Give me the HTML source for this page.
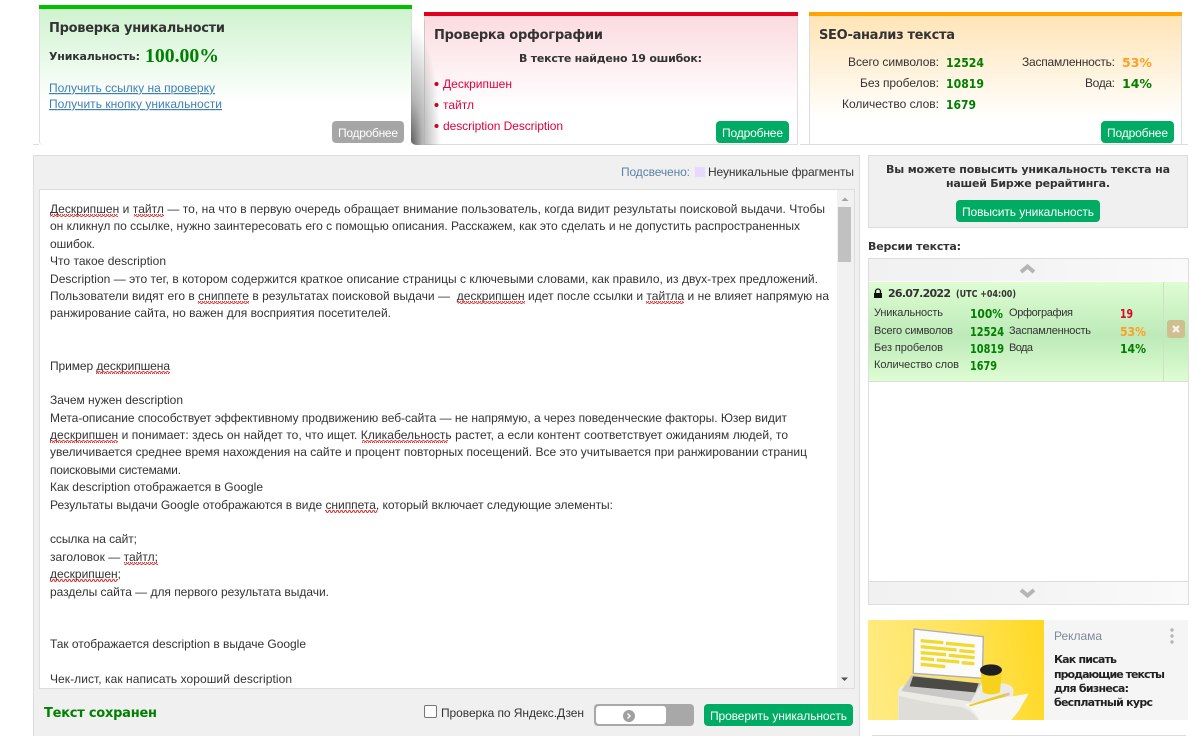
<!DOCTYPE html>
<html lang="ru"><head><meta charset="utf-8"><title>Проверка уникальности</title>
<style>
html,body{margin:0;padding:0;background:#fff;width:1200px;height:736px;overflow:hidden}
#p{position:relative;width:1200px;height:736px;overflow:hidden}
.b{position:absolute;box-sizing:border-box}
svg{position:absolute;left:0;top:0}
text{font-family:"Liberation Sans",sans-serif;font-size:12px;fill:#333;white-space:pre}
.h{font-family:"DejaVu Sans",sans-serif;font-weight:bold;font-size:13px;fill:#333}
.s{font-family:"DejaVu Sans",sans-serif;font-weight:bold;font-size:11px;fill:#333}
.g{fill:#008000}.o{fill:#ffa020}.r{fill:#e0002a}
.v{font-family:"DejaVu Sans",sans-serif;font-weight:bold;font-size:12px}
.w{fill:#fff}.l{fill:#3d7fb5;text-decoration:underline}
.c{fill:#e0003c}
</style></head><body><div id="p">
<div class="b" style="left:39px;top:5px;width:373px;height:140px;border:1px solid #ddd;border-top:0;border-bottom:0;border-radius:0 0 4px 4px;background:linear-gradient(#cdf2cd,#fff 70%)"></div>
<div class="b" style="left:33px;top:144px;width:6px;height:1px;background:#ddd"></div>
<div class="b" style="left:39px;top:5px;width:373px;height:4px;background:#00c000"></div>
<div class="b" style="left:424px;top:12px;width:374px;height:133px;border:1px solid #ddd;border-top:0;background:linear-gradient(#fbd9de,#fff 72%)"></div>
<div class="b" style="left:411px;top:20px;width:40px;height:125px;border-radius:0 0 0 5px;background:radial-gradient(ellipse 30px 120px at 0 100%,rgba(85,85,85,.95),rgba(130,130,130,.6) 38%,rgba(255,255,255,0) 100%)"></div>
<div class="b" style="left:424px;top:20px;width:1px;height:125px;background:#bbb;opacity:.6"></div>
<div class="b" style="left:424px;top:12px;width:374px;height:4px;background:#e0001f"></div>
<div class="b" style="left:809px;top:12px;width:373px;height:133px;border:1px solid #ddd;border-top:0;border-bottom:0;background:linear-gradient(#ffe3b3,#fff 80%)"></div>
<div class="b" style="left:809px;top:12px;width:373px;height:4px;background:#ffa500"></div>
<div class="b" style="left:800px;top:144px;width:388px;height:1px;background:#ddd"></div>
<div class="b" style="left:332px;top:121px;width:72px;height:22px;border-radius:4px;background:#a6a6a6"></div>
<div class="b" style="left:716px;top:121px;width:73px;height:22px;border-radius:4px;background:#00ab63"></div>
<div class="b" style="left:1101px;top:121px;width:73px;height:22px;border-radius:4px;background:#00ab63"></div>

<div class="b" style="left:33px;top:155px;width:827px;height:590px;background:#f0f0f0;border:1px solid #ddd"></div>
<div class="b" style="left:39px;top:189px;width:816px;height:500px;background:#fff;border:1px solid #ddd"></div>
<div class="b" style="left:837px;top:190px;width:17px;height:498px;background:#f1f1f1"></div>
<div class="b" style="left:838px;top:207px;width:13px;height:55px;background:#c1c1c1"></div>

<div class="b" style="left:868px;top:155px;width:320px;height:73px;background:#f0f0f0;border:1px solid #ddd"></div>
<div class="b" style="left:956px;top:200px;width:144px;height:22px;border-radius:4px;background:#00ab63"></div>
<div class="b" style="left:868px;top:258px;width:321px;height:347px;background:#fff;border:1px solid #ddd"></div>
<div class="b" style="left:869px;top:259px;width:319px;height:22px;background:linear-gradient(90deg,#f1f1f1,#f4f4f4 50%,#fafafa)"></div>
<div class="b" style="left:869px;top:282px;width:319px;height:100px;border-bottom:1px solid #ddd;background:linear-gradient(#defdd2,#bdeab9 55%,#defdd2)"></div>
<div class="b" style="left:1163px;top:282px;width:1px;height:99px;background:#cfe0c8"></div>
<div class="b" style="left:1167px;top:320px;width:18px;height:18px;border-radius:3px;background:#cdbf8f"></div>
<div class="b" style="left:869px;top:581px;width:319px;height:23px;background:linear-gradient(90deg,#f1f1f1,#f4f4f4 50%,#fafafa);border-top:1px solid #ddd"></div>
<div class="b" style="left:1044px;top:620px;width:144px;height:100px;background:#f5f5f5"></div>
<div class="b" style="left:868px;top:620px;width:176px;height:100px;background:linear-gradient(80deg,#ffeb85,#ffe35a 55%,#ffd820);overflow:hidden"></div>
<div class="b" style="left:872px;top:735px;width:314px;height:1px;background:#ddd"></div>
<div class="b" style="left:594px;top:704px;width:100px;height:22px;border-radius:4px;background:#a8a8a8"></div>
<div class="b" style="left:596px;top:706px;width:70px;height:18px;border-radius:3px;background:#fff"></div>
<div class="b" style="left:704px;top:704px;width:149px;height:22px;border-radius:4px;background:#00ab63"></div>
<div class="b" style="left:424px;top:705px;width:13px;height:13px;border-radius:2px;background:#fff;border:1px solid #767676"></div>

<svg width="1200" height="736" viewBox="0 0 1200 736" xmlns="http://www.w3.org/2000/svg">
<defs><pattern id="wv" width="4" height="3" patternUnits="userSpaceOnUse"><path d="M0 2.500L1 .5 2 .5 3 2.500 4 2.500" fill="none" stroke="#e03030" stroke-width="1"/></pattern>
<clipPath id="ad"><rect x="0" y="15" width="528" height="300"/></clipPath></defs>

<g transform="translate(868 615) scale(.3333)" clip-path="url(#ad)">
<path d="M90 232Q90 212 125 208L410 205Q438 212 436 228L430 315 90 315Z" fill="#ecebe6"/>
<path d="M92 242Q190 268 282 276Q318 292 330 315L92 315Z" fill="#dfddd8"/>
<path d="M290 268L482 236 452 288 430 315 335 315Q318 285 290 268Z" fill="#f8f7f3"/>
<path d="M138 42L346 65 343 190 136 175Z" fill="#fbfbfb" stroke="#a9adb8" stroke-width="4"/>
<path d="M130 180L340 205 308 260 100 228Z" fill="#c9c8c7"/>
<path d="M135 184L332 205 322 232 125 214Z" fill="#4c4a44"/>
<g fill="#f1d92e"><path d="M158 72l68 6v10l-68-6zM234 80l86 8v10l-86-8zM158 90l108 10v10l-108-10zM274 102l46 4v10l-46-4zM158 108l76 6v10l-76-6zM242 116l78 7v10l-78-7zM158 125l40 4v10l-40-4zM206 130l68 6v10l-68-6zM281 138l38 3v10l-38-3zM158 143l74 7v10l-74-7z"/></g>
<path d="M338 170L401 170 396 232Q368 244 344 232Z" fill="#f6d11e"/>
<ellipse cx="369" cy="165" rx="33" ry="17" fill="#1f1f1f"/>
<path d="M302 270L410 236 414 244 306 274Z" fill="#e9cb2a"/>
<path d="M410 236L424 232 426 240 414 244Z" fill="#e8b8b0"/>
</g>

<path d="M1021 272l6.500-5.500 6.500 5.500" fill="none" stroke="#b5b5b5" stroke-width="4"/>
<path d="M1021 590l6.500 5.500 6.500-5.500" fill="none" stroke="#b5b5b5" stroke-width="4"/>
<path d="M1173 326l6 6m0-6l-6 6" stroke="#f5f1e5" stroke-width="2.500"/>
<path d="M841.500 201l3.500-3.500 3.500 3.500z" fill="#a3a3a3"/><path d="M841 677.500l3.500 3.500 3.500-3.500z" fill="#505050"/>
<circle cx="629" cy="716" r="6" fill="#a0a0a0"/><path d="M627.500 713.500l2.500 2.500-2.500 2.500" fill="none" stroke="#fff" stroke-width="1.500"/>
<rect x="874" y="293" width="8" height="5" fill="#111"/><path d="M875.500 293v-1.500a2.500 2.500 0 0 1 5 0v1.500" fill="none" stroke="#111" stroke-width="1.300"/>
<rect x="695" y="167" width="10" height="10" fill="#e9d8fd"/>
<circle cx="436.500" cy="84" r="2" fill="#d00020"/><circle cx="436.500" cy="105" r="2" fill="#d00020"/><circle cx="436.500" cy="126" r="2" fill="#d00020"/>
<circle cx="1172" cy="630" r="1.700" fill="#b5b5b5"/><circle cx="1172" cy="636" r="1.700" fill="#b5b5b5"/><circle cx="1172" cy="642" r="1.700" fill="#b5b5b5"/>

<text class="h" x="49" y="32" textLength="176">Проверка уникальности</text>
<text class="s" x="49" y="60" textLength="91" fill="#222">Уникальность:</text>
<text class="g" x="145" y="62" textLength="74" lengthAdjust="spacingAndGlyphs" style="font-family:'Liberation Serif',serif;font-weight:bold;font-size:20px">100.00%</text>
<text class="l" x="49" y="92" textLength="166">Получить ссылку на проверку</text>
<text class="l" x="49" y="108" textLength="173">Получить кнопку уникальности</text>
<text class="w" x="338" y="137" textLength="60">Подробнее</text>

<text class="h" x="434" y="39" textLength="169">Проверка орфографии</text>
<text class="s" x="519" y="62" textLength="183">В тексте найдено 19 ошибок:</text>
<text class="c" x="443" y="88" textLength="69">Дескрипшен</text>
<text class="c" x="443" y="109" textLength="31">тайтл</text>
<text class="c" x="443" y="130" textLength="120">description Description</text>
<text class="w" x="722" y="137" textLength="61">Подробнее</text>

<text class="h" x="819" y="39" textLength="136">SEO-анализ текста</text>
<text x="848" y="66" textLength="91">Всего символов:</text>
<text x="860" y="87" textLength="79">Без пробелов:</text>
<text x="842" y="108" textLength="97">Количество слов:</text>
<text class="v g" x="946" y="67" textLength="38" lengthAdjust="spacingAndGlyphs">12524</text>
<text class="v g" x="946" y="88" textLength="38" lengthAdjust="spacingAndGlyphs">10819</text>
<text class="v g" x="946" y="109" textLength="30" lengthAdjust="spacingAndGlyphs">1679</text>
<text x="1022" y="66" textLength="93">Заспамленность:</text>
<text x="1085" y="87" textLength="30">Вода:</text>
<text class="v o" x="1122" y="67" textLength="30" lengthAdjust="spacingAndGlyphs">53%</text>
<text class="v g" x="1122" y="88" textLength="30" lengthAdjust="spacingAndGlyphs">14%</text>
<text class="w" x="1107" y="137" textLength="61">Подробнее</text>

<text x="621" y="176" textLength="69" style="fill:#5a82a8">Подсвечено:</text>
<text x="708" y="176" textLength="146">Неуникальные фрагменты</text>

<text x="50" y="213" textLength="775">Дескрипшен и тайтл — то, на что в первую очередь обращает внимание пользователь, когда видит результаты поисковой выдачи. Чтобы</text>
<text x="50" y="230" textLength="750">он кликнул по ссылке, нужно заинтересовать его с помощью описания. Расскажем, как это сделать и не допустить распространенных</text>
<text x="50" y="248" textLength="45">ошибок.</text>
<text x="50" y="265" textLength="116">Что такое description</text>
<text x="50" y="283" textLength="768">Description — это тег, в котором содержится краткое описание страницы с ключевыми словами, как правило, из двух-трех предложений.</text>
<text x="50" y="300" textLength="779">Пользователи видят его в сниппете в результатах поисковой выдачи —  дескрипшен идет после ссылки и тайтла и не влияет напрямую на</text>
<text x="50" y="317" textLength="341">ранжирование сайта, но важен для восприятия посетителей.</text>
<text x="50" y="370" textLength="120">Пример дескрипшена</text>
<text x="50" y="404" textLength="133">Зачем нужен description</text>
<text x="50" y="422" textLength="737">Мета-описание способствует эффективному продвижению веб-сайта — не напрямую, а через поведенческие факторы. Юзер видит</text>
<text x="50" y="439" textLength="738">дескрипшен и понимает: здесь он найдет то, что ищет. Кликабельность растет, а если контент соответствует ожиданиям людей, то</text>
<text x="50" y="456" textLength="757">увеличивается среднее время нахождения на сайте и процент повторных посещений. Все это учитывается при ранжировании страниц</text>
<text x="50" y="474" textLength="131">поисковыми системами.</text>
<text x="50" y="491" textLength="213">Как description отображается в Google</text>
<text x="50" y="509" textLength="563">Результаты выдачи Google отображаются в виде сниппета, который включает следующие элементы:</text>
<text x="50" y="543" textLength="87">ссылка на сайт;</text>
<text x="50" y="561" textLength="108">заголовок — тайтл;</text>
<text x="50" y="578" textLength="71">дескрипшен;</text>
<text x="50" y="596" textLength="279">разделы сайта — для первого результата выдачи.</text>
<text x="50" y="648" textLength="256">Так отображается description в выдаче Google</text>
<text x="50" y="683" textLength="242">Чек-лист, как написать хороший description</text>

<g fill="url(#wv)">
<rect x="50" y="214" width="68" height="3"/><rect x="134" y="214" width="30" height="3"/>
<rect x="198" y="301" width="51" height="3"/><rect x="458" y="301" width="67" height="3"/><rect x="646" y="301" width="38" height="3"/>
<rect x="96" y="371" width="74" height="3"/>
<rect x="50" y="440" width="68" height="3"/><rect x="362" y="440" width="86" height="3"/>
<rect x="325" y="510" width="52" height="3"/>
<rect x="124" y="562" width="34" height="3"/><rect x="50" y="579" width="68" height="3"/>
</g>

<text class="s" x="886" y="173" textLength="284">Вы можете повысить уникальность текста на</text>
<text class="s" x="946" y="187" textLength="164">нашей Бирже рерайтинга.</text>
<text class="w" x="962" y="216" textLength="132">Повысить уникальность</text>
<text class="s" x="868" y="250" textLength="93">Версии текста:</text>

<text class="s" x="888" y="297" textLength="63" fill="#444">26.07.2022</text>
<text class="s" x="956" y="297" textLength="60" lengthAdjust="spacingAndGlyphs" style="font-size:10px">(UTC +04:00)</text>
<text style="font-size:11px" x="874" y="316" textLength="69">Уникальность</text>
<text style="font-size:11px" x="874" y="334" textLength="79">Всего символов</text>
<text style="font-size:11px" x="874" y="351" textLength="69">Без пробелов</text>
<text style="font-size:11px" x="874" y="368" textLength="85">Количество слов</text>
<text style="font-size:11px" x="1009" y="316" textLength="64">Орфография</text>
<text style="font-size:11px" x="1009" y="334" textLength="82">Заспамленность</text>
<text style="font-size:11px" x="1009" y="351" textLength="24">Вода</text>
<text class="v g" x="970" y="318" textLength="33" lengthAdjust="spacingAndGlyphs">100%</text>
<text class="v g" x="970" y="336" textLength="34" lengthAdjust="spacingAndGlyphs">12524</text>
<text class="v g" x="970" y="353" textLength="34" lengthAdjust="spacingAndGlyphs">10819</text>
<text class="v g" x="970" y="370" textLength="27" lengthAdjust="spacingAndGlyphs">1679</text>
<text class="v r" x="1120" y="318" textLength="13" lengthAdjust="spacingAndGlyphs">19</text>
<text class="v o" x="1120" y="336" textLength="26" lengthAdjust="spacingAndGlyphs">53%</text>
<text class="v g" x="1120" y="353" textLength="26" lengthAdjust="spacingAndGlyphs">14%</text>

<text x="1054" y="640" textLength="48" style="fill:#7d8a9a">Реклама</text>
<text class="s" x="1054" y="663" textLength="63" style="fill:#222">Как писать</text>
<text class="s" x="1054" y="678" textLength="111" style="fill:#222">продающие тексты</text>
<text class="s" x="1054" y="692" textLength="75" style="fill:#222">для бизнеса:</text>
<text class="s" x="1054" y="706" textLength="99" style="fill:#222">бесплатный курс</text>

<text class="h g" x="44" y="717" textLength="113" style="fill:#008000">Текст сохранен</text>
<text x="441" y="717" textLength="143">Проверка по Яндекс.Дзен</text>
<text class="w" x="710" y="720" textLength="137">Проверить уникальность</text>
</svg>
</div></body></html>
